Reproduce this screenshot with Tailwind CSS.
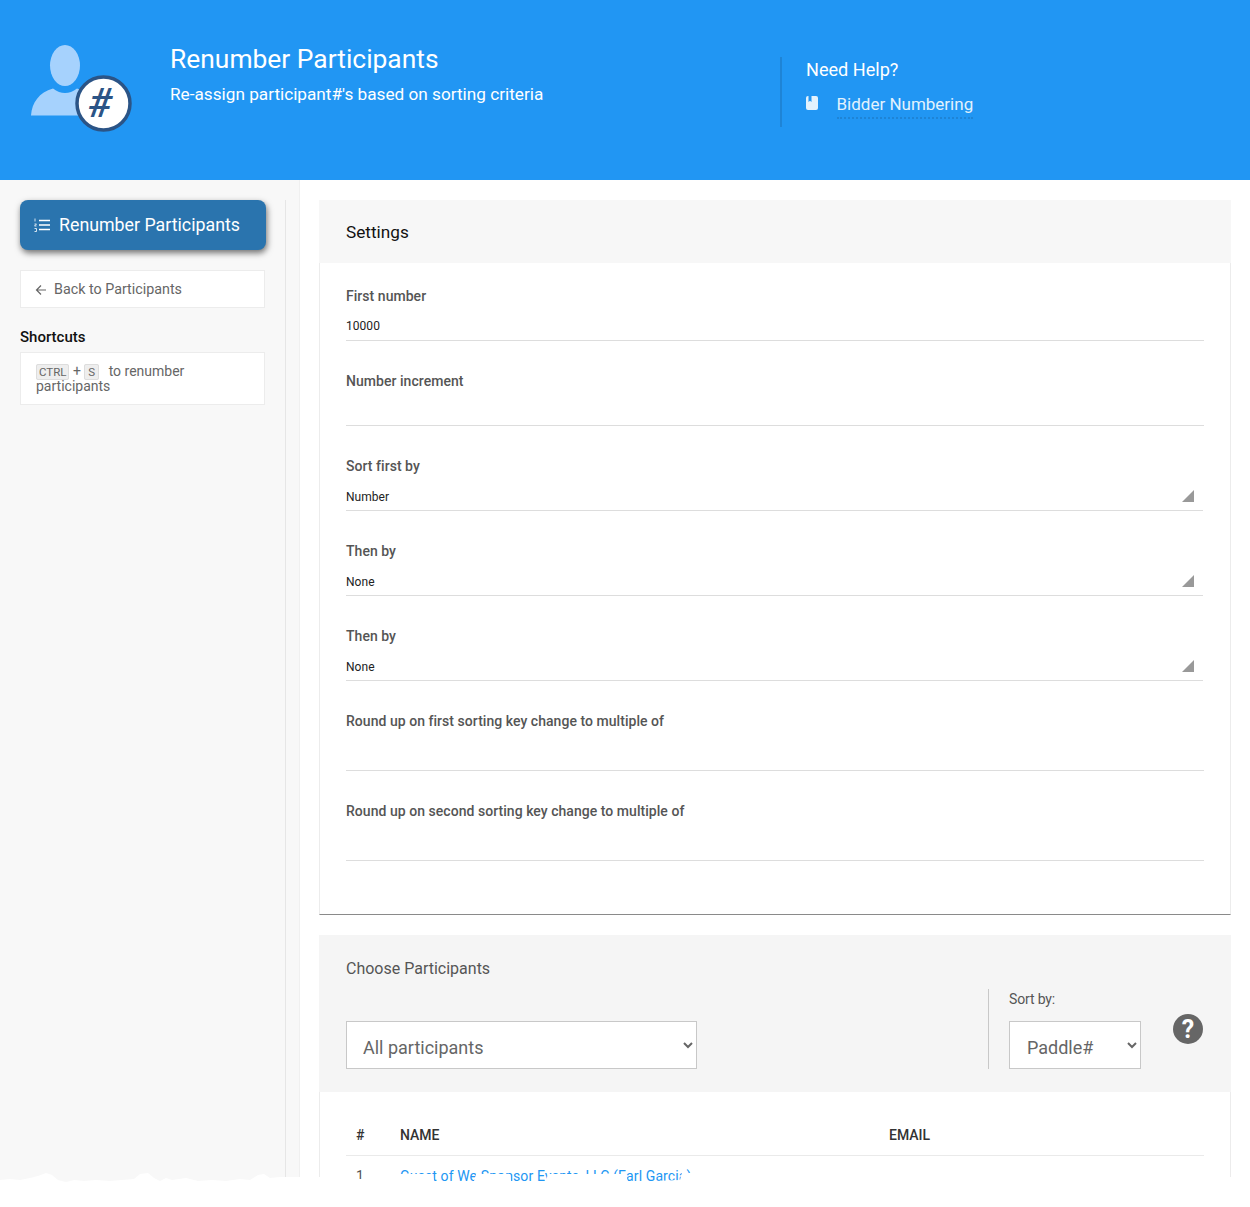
<!DOCTYPE html>
<html lang="en">
<head>
  <meta charset="UTF-8">
  <title>Renumber Participants</title>
  <script src="https://cdn.jsdelivr.net/npm/@tailwindcss/browser@4"></script>
</head>
<body class="bg-white font-['Roboto',sans-serif] text-[#555]">
<div class="relative h-[1207px] w-[1250px] overflow-hidden bg-white">

  <!-- Header -->
  <header class="flex h-[180px] bg-[#2196f3] text-white">
    <div class="relative w-[170px] shrink-0">
      <svg class="absolute left-[28px] top-[42px]" width="108" height="94" viewBox="28 42 108 94">
        <ellipse cx="65" cy="65.500" rx="15" ry="20.500" fill="#a6d2fd"/>
        <path d="M31 115.500c1-13 8-23 22-27 4 3 8 4.500 12 4.500s8-1.500 12-4.500c10 3 20 12 20 27z" fill="#a6d2fd"/>
        <circle cx="103.500" cy="103.500" r="26.500" fill="#fff" stroke="#2b5486" stroke-width="3.500"/>
      </svg>
      <span class="absolute left-[86px] top-[79px] w-[28px] text-center text-[41px] leading-[48px] font-medium italic text-[#2b5486]">#</span>
    </div>
    <div class="w-[610px] shrink-0 pt-[42px]">
      <h1 class="text-[26.400px] leading-[34px]">Renumber Participants</h1>
      <p class="mt-[6px] text-[17.200px] leading-[24px]">Re-assign participant#'s based on sorting criteria</p>
    </div>
    <div class="mt-[57px] h-[70px] border-l-2 border-[#1e84d6] pl-[24px]">
      <p class="mt-[1px] text-[18.100px] leading-[24px]">Need Help?</p>
      <div class="mt-[10px] flex items-start">
        <svg class="mt-[4px]" width="12" height="14" viewBox="0 0 12 14">
          <rect width="12" height="14" rx="2" fill="#e3f2fd"/>
          <path d="M2.500 0h3v6L4 4.700 2.500 6z" fill="#2196f3"/>
        </svg>
        <a class="ml-[18.500px] block h-[27px] border-b-2 border-dotted border-[#1e84d6] text-[17px] leading-[24px] text-[#e3f2fd]">Bidder Numbering</a>
      </div>
    </div>
  </header>

  <div class="flex h-[1002px] overflow-hidden">
    <!-- Sidebar -->
    <aside class="h-full w-[300px] shrink-0 border-r border-[#f0f0f0] bg-[#f8f8f8] pt-[20px]">
      <div class="h-full w-[286px] border-r border-[#e6e6e6] pl-[20px]">
        <button class="flex h-[50px] w-[246px] items-center gap-[9px] rounded-[8px] bg-[#2a74ae] pl-[14px] text-[17.800px] text-white shadow-[1px_3px_6px_rgba(0,0,0,0.55)]">
          <svg width="16" height="14" viewBox="0 0 16 14" fill="none" stroke="#fff">
            <path d="M5 2.500h11M5 7h11M5 11.500h11" stroke-width="1.400"/>
            <path d="M1 .500v3M.500 6h2l-2 2h2M.500 10.500h2v3h-2" stroke-width=".8"/>
          </svg>
          Renumber Participants
        </button>
        <a class="mt-[20px] flex h-[38px] w-[245px] items-center border border-[#ececec] bg-white pl-[14px] pt-[1px] text-[14.300px] text-[#666]">
          <svg width="12" height="12" viewBox="0 0 12 12" fill="none" stroke="#666" stroke-width="1.200">
            <path d="M11 6H1.500M6 1.500 1.500 6 6 10.500"/>
          </svg>
          <span class="ml-[7px]">Back to Participants</span>
        </a>
        <h3 class="mt-[20px] text-[15px] leading-[18px] font-medium text-[#111]">Shortcuts</h3>
        <div class="mt-[6px] h-[53px] w-[245px] border border-[#ececec] bg-white px-[15px] pt-[11px] text-[14px] leading-[15px] text-[#666]">
          <kbd class="rounded-[2px] border border-[#ddd] bg-[#eee] px-[2px] font-['Roboto',sans-serif] text-[11.500px] leading-[12px]">CTRL</kbd> + <kbd class="rounded-[2px] border border-[#ddd] bg-[#eee] px-[3px] font-['Roboto',sans-serif] text-[11.500px] leading-[12px]">S</kbd> <span class="ml-[6px]">to renumber participants</span>
        </div>
      </div>
    </aside>

    <!-- Main column -->
    <main class="w-[950px] pl-[19px] pt-[20px]">
      <!-- Settings -->
      <section class="h-[715px] w-[912px] border-x border-b border-x-[#ececec] border-b-[#8a8a8a]">
        <h2 class="-mx-px flex h-[63px] items-center bg-[#f7f7f7] pl-[27px] pt-[2px] text-[17.200px] text-[#111]">Settings</h2>
        <div class="px-[26px] pt-[23px] tracking-[0.04px]">
          <div class="mb-[30px]">
            <label class="block text-[14px] leading-[20px] font-medium">First number</label>
            <div class="flex h-[35px] items-center border-b border-[#ddd] pt-[6px] text-[12px] text-[#222]">10000</div>
          </div>
          <div class="mb-[30px]">
            <label class="block text-[14px] leading-[20px] font-medium">Number increment</label>
            <div class="h-[35px] border-b border-[#ddd]"></div>
          </div>
          <div class="mb-[30px]">
            <label class="block text-[14px] leading-[20px] font-medium">Sort first by</label>
            <div class="relative mr-px flex h-[35px] items-center border-b border-[#ddd] pt-[8px] text-[12px] text-[#222]">Number
              <span class="absolute right-[9px] top-[14px] size-[12px] bg-[#999] [clip-path:polygon(100%_0,100%_100%,0_100%)]"></span>
            </div>
          </div>
          <div class="mb-[30px]">
            <label class="block text-[14px] leading-[20px] font-medium">Then by</label>
            <div class="relative mr-px flex h-[35px] items-center border-b border-[#ddd] pt-[8px] text-[12px] text-[#222]">None
              <span class="absolute right-[9px] top-[14px] size-[12px] bg-[#999] [clip-path:polygon(100%_0,100%_100%,0_100%)]"></span>
            </div>
          </div>
          <div class="mb-[30px]">
            <label class="block text-[14px] leading-[20px] font-medium">Then by</label>
            <div class="relative mr-px flex h-[35px] items-center border-b border-[#ddd] pt-[8px] text-[12px] text-[#222]">None
              <span class="absolute right-[9px] top-[14px] size-[12px] bg-[#999] [clip-path:polygon(100%_0,100%_100%,0_100%)]"></span>
            </div>
          </div>
          <div class="mb-[30px]">
            <label class="block text-[14px] leading-[20px] font-medium">Round up on first sorting key change to multiple of</label>
            <div class="h-[40px] border-b border-[#ddd]"></div>
          </div>
          <div>
            <label class="block text-[14px] leading-[20px] font-medium">Round up on second sorting key change to multiple of</label>
            <div class="h-[40px] border-b border-[#ddd]"></div>
          </div>
        </div>
      </section>

      <!-- Choose Participants -->
      <section class="mt-[20px] w-[912px] border-x border-[#ececec]">
        <div class="-mx-px flex h-[157px] bg-[#f5f5f5] pl-[27px]">
          <div class="w-[642px] shrink-0">
            <h2 class="mt-[24px] text-[16px] leading-[20px]">Choose Participants</h2>
            <select class="mt-[42px] h-[48px] w-[351px] border border-[#c8c8c8] bg-white pl-[12px] pt-[4px] text-[18px] text-[#666]">
              <option>All participants</option>
            </select>
          </div>
          <div class="mt-[54px] h-[80px] w-[139px] shrink-0 border-l border-[#c8c8c8] pl-[20px]">
            <p class="text-[14px] leading-[20px] tracking-[-0.15px]">Sort by:</p>
            <select class="mt-[12px] h-[48px] w-[132px] border border-[#c8c8c8] bg-white pl-[13px] pt-[4px] text-[18px] text-[#666]">
              <option>Paddle#</option>
            </select>
          </div>
          <div class="ml-[46px] mt-[79px] flex size-[30px] items-center justify-center rounded-full bg-[#666] text-[25px] leading-none font-bold text-white">?</div>
        </div>
        <div class="px-[26px] pt-[25px]">
          <table class="w-[858px] table-fixed text-left text-[14px]">
            <thead>
              <tr class="h-[38px] border-b border-[#eaeaea] text-[#333]">
                <th class="w-[54px] pl-[10px] font-medium">#</th>
                <th class="w-[489px] font-medium">NAME</th>
                <th class="font-medium">EMAIL</th>
              </tr>
            </thead>
            <tbody>
              <tr class="h-[42px]">
                <td class="pl-[10px] text-[#555]">1</td>
                <td class="tracking-[0.11px] text-[#2196f3]">Guest of We Sponsor Events, LLC (Earl Garcia)</td>
                <td></td>
              </tr>
            </tbody>
          </table>
        </div>
      </section>
    </main>
  </div>

  <!-- Torn paper edge over the bottom of the page -->
  <svg class="absolute bottom-0 left-0" width="1250" height="37" viewBox="0 1170 1250 37">
    <path fill="#fff" d="M0 1180L10 1179L20 1180L30 1178L38 1176L46 1173L52 1175L58 1180L66 1182L74 1180L84 1181L96 1180L110 1181L122 1180L134 1179L140 1174L148 1173L154 1178L160 1181L166 1178L172 1180L186 1178L198 1181L212 1180L226 1181L240 1179L250 1180L258 1175L264 1174L270 1178L280 1177L350 1177L350 1179L370 1179L370 1177L400 1177L400 1174L433 1174L434 1181L474 1181L476 1174L510 1174L511 1181L546 1181L548 1174L626 1174L628 1182L680 1180L682 1173L700 1173L702 1177L1250 1177V1207H0Z"/>
  </svg>
</div>
</body>
</html>
